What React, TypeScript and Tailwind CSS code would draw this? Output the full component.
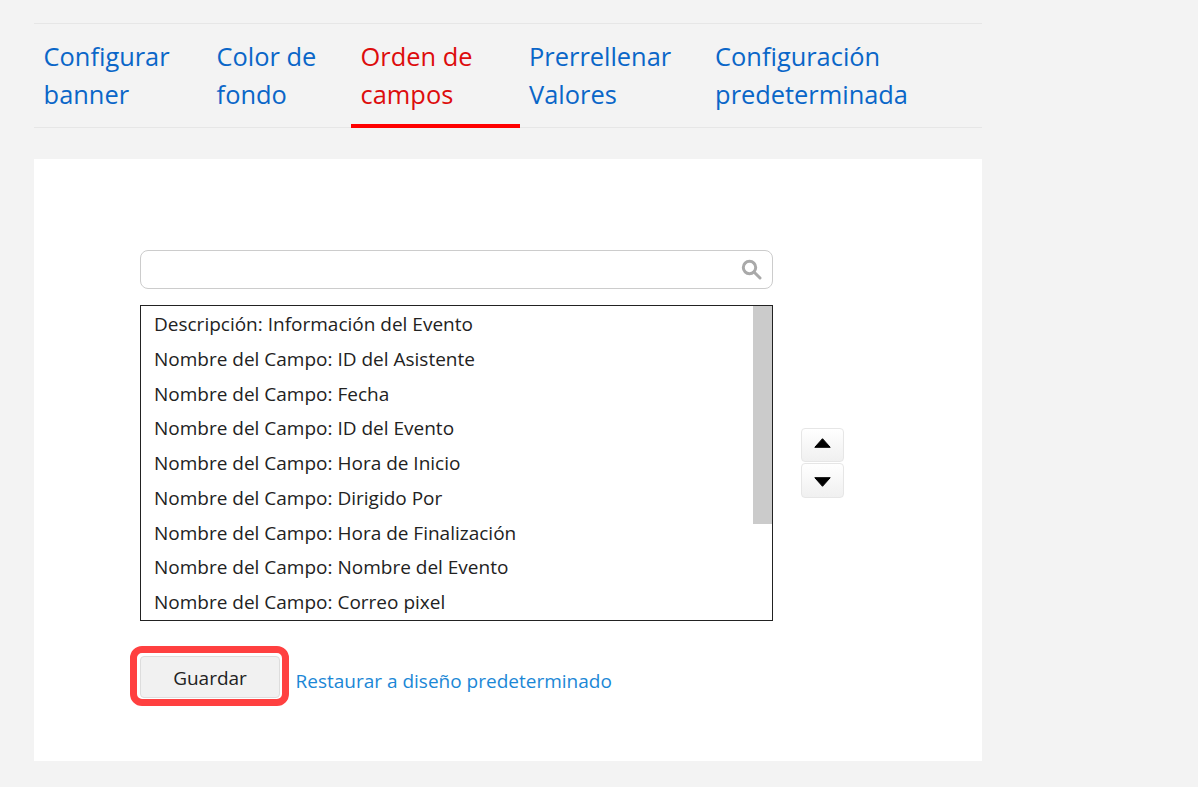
const tabs = [
  { lines: ["Configurar", "banner"], cls: "w-[173px] border-transparent text-[#0a66c8]" },
  { lines: ["Color de", "fondo"], cls: "w-[144px] border-transparent text-[#0a66c8]" },
  { lines: ["Orden de", "campos"], cls: "w-[168.5px] border-[#ff0000] text-[#dd0c0c]" },
  { lines: ["Prerrellenar", "Valores"], cls: "w-[186px] border-transparent text-[#0a66c8]" },
  { lines: ["Configuración", "predeterminada"], cls: "border-transparent text-[#0a66c8]" },
];

const items = [
  "Descripción: Información del Evento",
  "Nombre del Campo: ID del Asistente",
  "Nombre del Campo: Fecha",
  "Nombre del Campo: ID del Evento",
  "Nombre del Campo: Hora de Inicio",
  "Nombre del Campo: Dirigido Por",
  "Nombre del Campo: Hora de Finalización",
  "Nombre del Campo: Nombre del Evento",
  "Nombre del Campo: Correo pixel",
];

export default function App() {
  return (
    <div className="min-h-[787px] bg-[#f3f3f3] pl-[34px] pt-[23px] font-['Open_Sans',sans-serif]">
      <div className="w-[948px]">
        <div className="flex h-[105px] border-y border-[#e6e6e6]">
          {tabs.map((t) => (
            <div
              key={t.lines[0]}
              className={`h-[104px] border-b-[4px] pl-[9.6px] pt-[13px] text-[25.4px] leading-[38px] ${t.cls}`}
            >
              {t.lines.map((l) => (
                <div key={l} className="whitespace-nowrap">{l}</div>
              ))}
            </div>
          ))}
        </div>
        <div className="mt-[31px] h-[602px] bg-white pl-[106px] pt-[91px]">
          <div className="flex">
            <div className="w-[633px]">
              <div className="flex h-[39px] items-center justify-end rounded-[8px] border border-[#cccccc] pr-[10px]">
                <svg width="21" height="21" viewBox="0 0 21 21" fill="none" stroke="#a9a9a9" strokeWidth="3">
                  <circle cx="8.5" cy="8.5" r="6.2" />
                  <path d="M13 13l6 6" strokeLinecap="round" />
                </svg>
              </div>
              <div className="mt-[16px] flex h-[316px] overflow-hidden border border-[#222222]">
                <div className="flex-1 pl-[13px] pt-[1px] text-[19px] leading-[34.75px] text-[#222222]">
                  {items.map((i) => (
                    <div key={i} className="whitespace-nowrap">{i}</div>
                  ))}
                </div>
                <div className="h-[218px] w-[19px] bg-[#cbcbcb]" />
              </div>
            </div>
            <div className="ml-[28px] mt-[178px] flex w-[43px] flex-col gap-px">
              <button className="flex h-[34px] items-center justify-center rounded-[4px] border border-[#e6e6e6] bg-gradient-to-b from-white to-[#f0f0f0]">
                <svg className="mb-[4px]" width="17" height="10" viewBox="0 0 17 10"><path d="M8.5 .7l7.7 8.6H.8z" fill="#000" stroke="#000" strokeWidth="1" strokeLinejoin="round" /></svg>
              </button>
              <button className="flex h-[35px] items-center justify-center rounded-[4px] border border-[#e6e6e6] bg-gradient-to-b from-white to-[#f0f0f0]">
                <svg className="mt-[2px]" width="17" height="10" viewBox="0 0 17 10"><path d="M.8 .7h15.4L8.5 9.3z" fill="#000" stroke="#000" strokeWidth="1" strokeLinejoin="round" /></svg>
              </button>
            </div>
          </div>
          <div className="mt-[35px] flex items-center">
            <div className="relative">
              <button className="h-[42px] w-[140px] rounded-[4px] border border-[#dddddd] bg-[#f1f1f1] pt-[2px] text-[19px] text-[#222222]">
                Guardar
              </button>
              <div className="absolute -left-[10px] -top-[10px] h-[60px] w-[159px] rounded-[12px] border-[7px] border-[#ff4040]" />
            </div>
            <a className="ml-[15.5px] mt-[8px] text-[19px] text-[#1b87d6]">Restaurar a diseño predeterminado</a>
          </div>
        </div>
      </div>
    </div>
  );
}
